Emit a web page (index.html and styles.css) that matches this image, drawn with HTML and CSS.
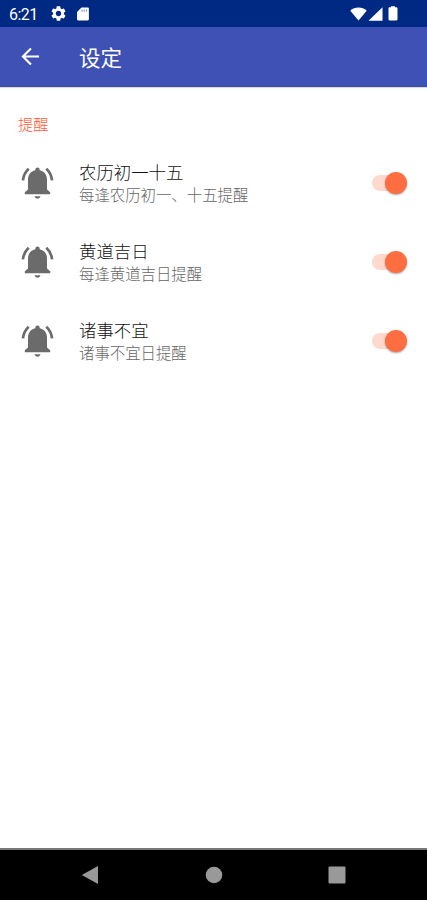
FILE: index.html
```
<!DOCTYPE html>
<html lang="zh-CN">
<head>
  <meta charset="UTF-8" />
  <meta name="viewport" content="width=device-width, initial-scale=1.0"/>
  <title>设定</title>
  <link rel="stylesheet" href="styles.css">
</head>
<body>

  <svg class="sprite" aria-hidden="true">
    <symbol id="bell" viewBox="0 0 36 36">
      <path fill="#6b6b6b" d="M18 2.500a2.200 2.200 0 0 1 2.200 2.200v.6C24.800 6.300 27.500 9.800 27.500 14.500V24.500l3.200 2.700V29.200H5.300V27.200L8.500 24.500V14.500C8.500 9.800 11.200 6.300 15.800 5.300V4.700A2.200 2.200 0 0 1 18 2.500zM15 31.300h6c-.5 1.500-1.500 2.400-3 2.400s-2.500-.9-3-2.400z"/>
      <path fill="none" stroke="#6b6b6b" stroke-width="2.700" d="M3.400 15.300C4 10.500 5.700 7 9.200 3.800M32.600 15.300C32 10.500 30.300 7 26.800 3.800"/>
    </symbol>
  </svg>

  <div class="status-bar">
    <span class="clock">6:21</span>
    <svg class="gear" width="15" height="15" viewBox="2 2 20 20"><path fill="#fff" d="M19.140 12.940c.04-.3.06-.61.06-.94 0-.32-.02-.64-.07-.94l2.030-1.580c.18-.14.23-.41.12-.61l-1.920-3.320c-.12-.22-.37-.29-.59-.22l-2.390.96c-.5-.38-1.030-.7-1.620-.94l-.36-2.540c-.04-.24-.24-.41-.48-.41h-3.840c-.24 0-.43.17-.47.41l-.36 2.540c-.59.24-1.130.57-1.620.94l-2.390-.96c-.22-.08-.47 0-.59.22L2.740 8.870c-.12.21-.08.47.12.61l2.030 1.580c-.05.3-.09.63-.09.94s.02.64.07.94l-2.030 1.580c-.18.14-.23.41-.12.61l1.920 3.320c.12.22.37.29.59.22l2.390-.96c.5.38 1.030.7 1.620.94l.36 2.540c.05.24.24.41.48.41h3.840c.24 0 .44-.17.47-.41l.36-2.540c.59-.24 1.130-.56 1.620-.94l2.390.96c.22.08.47 0 .59-.22l1.920-3.320c.12-.22.07-.47-.12-.61l-2.010-1.580zM12 15.600c-1.980 0-3.600-1.620-3.600-3.600s1.620-3.600 3.600-3.600 3.600 1.620 3.600 3.600-1.620 3.600-3.600 3.600z"/></svg>
    <svg class="card" width="12" height="14" viewBox="0 0 12 14"><path fill="#fff" d="M4.500.5h6.200c.7 0 1.200.5 1.200 1.200v10.600c0 .7-.5 1.200-1.200 1.200H1.200C.5 13.500 0 13 0 12.300V5z"/><path stroke="#7b86b8" stroke-width="1" d="M5 2.500v2.200M7.200 2.500v2.200M9.400 2.500v2.200"/></svg>
    <div class="signals">
      <svg width="17" height="14" viewBox="0 0 17 14"><path fill="#fff" d="M8.500 13.500L.3 3.700C2.500 1.600 5.300.5 8.500.5s6 1.100 8.200 3.200z"/></svg>
      <svg width="15" height="14" viewBox="0 0 15 14"><path fill="#fff" d="M14.500.2v13.600H.5z"/></svg>
      <svg class="battery" width="10" height="15" viewBox="0 0 10 15"><path fill="#fff" d="M3 .3h4v1h1.300c.7 0 1.200.5 1.200 1.200v10.800c0 .7-.5 1.200-1.200 1.200H1.700c-.7 0-1.200-.5-1.200-1.200V2.500c0-.7.5-1.200 1.200-1.200H3z"/></svg>
    </div>
  </div>

  <header>
    <svg class="back" width="19" height="19" viewBox="0 0 20 20"><path fill="none" stroke="#fff" stroke-width="2.200" d="M19 10H2.500M10.500 1.500L2 10l8.500 8.500"/></svg>
    <h1>设定</h1>
  </header>

  <main>
    <h2>提醒</h2>

    <div class="item">
      <svg class="bell"><use href="#bell"/></svg>
      <div class="text">
        <div class="title">农历初一十五</div>
        <div class="desc">每逢农历初一、十五提醒</div>
      </div>
      <div class="switch"><span class="thumb"></span></div>
    </div>

    <div class="item">
      <svg class="bell"><use href="#bell"/></svg>
      <div class="text">
        <div class="title">黄道吉日</div>
        <div class="desc">每逢黄道吉日提醒</div>
      </div>
      <div class="switch"><span class="thumb"></span></div>
    </div>

    <div class="item">
      <svg class="bell"><use href="#bell"/></svg>
      <div class="text">
        <div class="title">诸事不宜</div>
        <div class="desc">诸事不宜日提醒</div>
      </div>
      <div class="switch"><span class="thumb"></span></div>
    </div>
  </main>

  <nav>
    <svg width="18" height="20" viewBox="0 0 18 20"><path fill="#999" d="M17 1v18L.8 10z"/></svg>
    <svg width="18" height="18" viewBox="0 0 18 18"><circle cx="9" cy="9" r="8.300" fill="#999"/></svg>
    <svg width="18" height="18" viewBox="0 0 18 18"><rect x=".5" y=".5" width="17" height="17" rx="1" fill="#999"/></svg>
  </nav>

</body>
</html>
```
FILE: styles.css
```
* {
  box-sizing: border-box;
}

body {
  margin: 0;
  height: 900px;
  display: flex;
  flex-direction: column;
  font-family: Roboto, "Noto Sans CJK SC", sans-serif;
  background-color: #fff;
  overflow: hidden;
}

svg {
  display: block;
  flex: none;
}

.sprite {
  position: absolute;
  width: 0;
  height: 0;
}

.status-bar {
  height: 27px;
  padding: 0 29px 0 9px;
  background-color: #002984;
  color: #fff;
  display: flex;
  align-items: center;
}

.clock {
  width: 42px;
  font-size: 16px;
  letter-spacing: -0.5px;
  line-height: 27px;
  padding-top: 1px;
}

.card {
  margin-left: 11px;
}

.signals {
  margin-left: auto;
  display: flex;
  align-items: center;
  gap: 1px;
}

.battery {
  margin-left: 4px;
}

header {
  height: 60px;
  padding-left: 21px;
  background-color: #3f51b5;
  border-bottom: 1px solid #3350a5;
  box-shadow: 0 1px 1px rgba(0, 0, 0, 0.15);
  color: #fff;
  display: flex;
  align-items: center;
}

.back {
  margin-bottom: 1px;
}

h1 {
  margin: 0 0 0 39px;
  padding-top: 5px;
  font-size: 21.5px;
  font-weight: 400;
  line-height: 30px;
}

main {
  flex: 1;
  padding-top: 27px;
}

h2 {
  margin: 0 0 7px 18px;
  font-size: 15.3px;
  font-weight: 300;
  line-height: 22px;
  color: #ff5a36;
}

.item {
  height: 79px;
  padding: 0 20px 0 19px;
  display: flex;
  align-items: center;
}

.bell {
  width: 37px;
  height: 36px;
}

.text {
  flex: 1;
  margin-left: 23px;
  padding-top: 5px;
}

.title {
  font-size: 17.4px;
  font-weight: 300;
  line-height: 22px;
  color: #111;
}

.desc {
  font-size: 15.4px;
  font-weight: 300;
  line-height: 24px;
  color: #666;
}

.switch {
  width: 35px;
  height: 16px;
  border-radius: 8px;
  background-color: #ffd9cd;
  display: flex;
  align-items: center;
  justify-content: flex-end;
}

.thumb {
  width: 22px;
  height: 22px;
  flex: none;
  border-radius: 50%;
  background-color: #ff6e40;
  box-shadow: 0 1px 2px rgba(0, 0, 0, 0.35);
}

nav {
  height: 52px;
  padding: 0 81px 0 81px;
  background-color: #000;
  border-top: 2px solid #777;
  display: flex;
  align-items: center;
  justify-content: space-between;
}
```
